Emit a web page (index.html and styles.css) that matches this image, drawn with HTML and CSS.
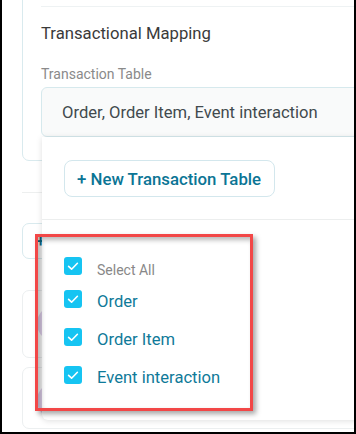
FILE: index.html
```html
<!DOCTYPE html>
<html>
<head>
<meta charset="utf-8">
<link rel="stylesheet" href="styles.css">
</head>
<body>
<div class="frame">
  <div class="col">
    <div class="card map-card">
      <div class="divider-top"></div>
      <div class="title">Transactional Mapping</div>
      <div class="label">Transaction Table</div>
      <div class="select">Order, Order Item, Event interaction</div>
    </div>
    <div class="hr"></div>
    <div class="card btn-card">+ New Transaction Table</div>
    <div class="card item-card"><span class="avatar"></span></div>
    <div class="card item-card item-card-2"><span class="avatar"></span></div>
  </div>

  <div class="menu">
    <div class="menu-head">
      <div class="new-btn">+ New Transaction Table</div>
    </div>
    <div class="list">
      <div class="row row-all">
        <span class="cb"><svg viewBox="0 0 18 18" width="18" height="18"><path d="M4.6 9.3 L7.6 12.2 L13.4 6.3" fill="none" stroke="#fff" stroke-width="1.6" stroke-linecap="round" stroke-linejoin="round"/></svg></span>
        <span class="txt txt-all">Select All</span>
      </div>
      <div class="row">
        <span class="cb"><svg viewBox="0 0 18 18" width="18" height="18"><path d="M4.6 9.3 L7.6 12.2 L13.4 6.3" fill="none" stroke="#fff" stroke-width="1.6" stroke-linecap="round" stroke-linejoin="round"/></svg></span>
        <span class="txt">Order</span>
      </div>
      <div class="row">
        <span class="cb"><svg viewBox="0 0 18 18" width="18" height="18"><path d="M4.6 9.3 L7.6 12.2 L13.4 6.3" fill="none" stroke="#fff" stroke-width="1.6" stroke-linecap="round" stroke-linejoin="round"/></svg></span>
        <span class="txt">Order Item</span>
      </div>
      <div class="row">
        <span class="cb"><svg viewBox="0 0 18 18" width="18" height="18"><path d="M4.6 9.3 L7.6 12.2 L13.4 6.3" fill="none" stroke="#fff" stroke-width="1.6" stroke-linecap="round" stroke-linejoin="round"/></svg></span>
        <span class="txt">Event interaction</span>
      </div>
    </div>
  </div>

  <div class="annot"></div>
</div>
</body>
</html>
```

FILE: styles.css
```css
html, body {
  margin: 0;
  padding: 0;
  background: #fff;
}

.frame {
  width: 356px;
  height: 434px;
  box-sizing: border-box;
  border: 2px solid #000;
  border-top: 0;
  position: relative;
  overflow: hidden;
  background: #fff;
  font-family: Roboto, "Liberation Sans", sans-serif;
}

.col {
  display: flex;
  flex-direction: column;
  padding-left: 20px;
  width: 420px;
}

.card {
  border: 1px solid #d9eaee;
  border-radius: 7px;
  background: #fff;
}

.map-card {
  margin-top: -10px;
  padding: 15px 0 23px 18px;
  display: flex;
  flex-direction: column;
}

.divider-top {
  height: 1px;
  background: #eef2f3;
}

.title {
  margin-top: 17px;
  font-size: 16.7px;
  line-height: 20px;
  color: #3a3a3a;
}

.label {
  margin-top: 21px;
  font-size: 14px;
  line-height: 18px;
  color: #8a8a8a;
}

.select {
  margin-top: 4px;
  height: 50px;
  box-sizing: border-box;
  border: 1px solid #d6e9ed;
  border-radius: 6px;
  background: #f9fafa;
  padding-left: 20px;
  display: flex;
  align-items: center;
  font-size: 16.6px;
  color: #424a4e;
}

.hr {
  margin-top: 31px;
  height: 1px;
  background: #edefef;
}

.btn-card {
  margin-top: 30px;
  height: 36px;
  box-sizing: border-box;
  width: 220px;
  display: flex;
  align-items: center;
  padding-left: 13px;
  font-size: 16.5px;
  font-weight: 500;
  color: #0c6f8c;
}

.item-card {
  margin-top: 31px;
  height: 68px;
  box-sizing: border-box;
  border-color: #eceff0;
  position: relative;
}

.item-card-2 {
  margin-top: 9px;
  height: 62px;
}

.avatar {
  position: absolute;
  left: 14px;
  top: 14px;
  width: 37px;
  height: 37px;
  border-radius: 50%;
  background: #e2d3ef;
}

.menu {
  position: absolute;
  left: 40px;
  top: 137px;
  width: 340px;
  height: 283px;
  background: #fff;
  border-radius: 0 0 6px 6px;
  box-shadow: 0 1px 6px rgba(0, 0, 0, 0.13);
}

.menu-head {
  padding: 23px 0 22px 22px;
  border-bottom: 1px solid #eceeee;
}

.new-btn {
  display: inline-flex;
  align-items: center;
  height: 37px;
  box-sizing: border-box;
  padding: 0 13px 0 12px;
  border: 1px solid #d3e7ed;
  border-radius: 8px;
  font-size: 16.8px;
  font-weight: 500;
  color: #0b7595;
}

.list {
  padding: 37px 0 0 22px;
  display: flex;
  flex-direction: column;
  gap: 20px;
}

.row {
  display: flex;
  align-items: center;
  height: 18px;
}

.row-all {
  margin-bottom: -5px;
}

.cb {
  width: 18px;
  height: 18px;
  border-radius: 3px;
  background: #16c4f2;
  display: flex;
  flex: none;
}

.txt {
  margin-left: 15px;
  padding-top: 6px;
  font-size: 16.6px;
  line-height: 20px;
  color: #0f7a99;
  white-space: nowrap;
}

.txt-all {
  padding-top: 8px;
  font-size: 14px;
  line-height: 18px;
  color: #888;
}

.annot {
  position: absolute;
  left: 33px;
  top: 234px;
  width: 218px;
  height: 177px;
  box-sizing: border-box;
  border: 3px solid #f24747;
  box-shadow: 3px 3px 5px rgba(0, 0, 0, 0.35), inset 3px 3px 5px rgba(0, 0, 0, 0.28);
}
```
